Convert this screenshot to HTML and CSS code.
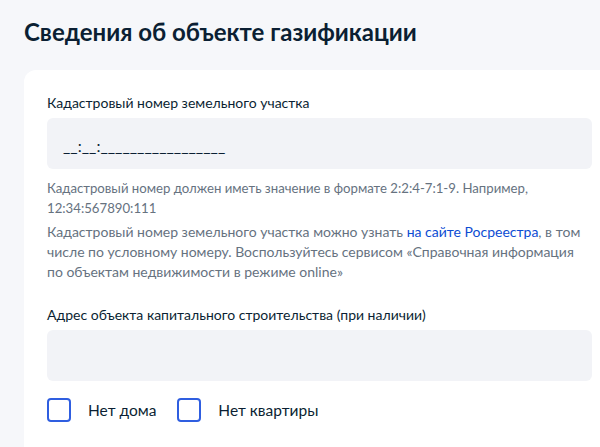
FILE: index.html
```html
<!DOCTYPE html>
<html lang="ru">
<head>
    <meta charset="UTF-8">
    <title>Сведения об объекте газификации</title>
    <link rel="stylesheet" href="styles.css">
</head>
<body>

<h1 class="page-title">Сведения об объекте газификации</h1>

<div class="card">
    <div class="field">
        <label class="field-label" for="cadastral">Кадастровый номер земельного участка</label>
        <div class="input-box">
            <input type="text" id="cadastral" placeholder="__:__:_________________">
        </div>
        <p class="hint hint-format">Кадастровый номер должен иметь значение в формате 2:2:4-7:1-9. Например, 12:34:567890:111</p>
        <p class="hint">Кадастровый номер земельного участка можно узнать <a href="#">на сайте Росреестра</a>, в том числе по условному номеру. Воспользуйтесь сервисом «Справочная информация по объектам недвижимости в режиме online»</p>
    </div>

    <div class="field">
        <label class="field-label" for="address">Адрес объекта капитального строительства (при наличии)</label>
        <div class="input-box">
            <input type="text" id="address">
        </div>
    </div>

    <div class="checks">
        <label class="check">
            <span class="box"></span>
            Нет дома
        </label>
        <label class="check">
            <span class="box"></span>
            Нет квартиры
        </label>
    </div>
</div>

</body>
</html>
```

FILE: styles.css
```css
body {
    font-family: Lato, "Noto Sans", sans-serif;
    margin: 0;
    background-color: #f6f7fa;
    color: #0b1f33;
    overflow: hidden;
}

.page-title {
    font-size: 24px;
    font-weight: 700;
    margin: 0;
    padding: 16px 24px 0;
    line-height: 32px;
}

.card {
    background-color: white;
    border-radius: 12px 0 0 0;
    margin: 22px 0 0 24px;
    padding: 23px 8px 40px 23px;
}

.field {
    margin-bottom: 23px;
}

.field-label {
    display: block;
    font-size: 14px;
    line-height: 20px;
    margin-bottom: 5px;
}

.input-box {
    background-color: #f2f3f7;
    border-radius: 6px;
    height: 51px;
    display: flex;
    align-items: flex-end;
}

.input-box input {
    border: none;
    background: transparent;
    font-family: inherit;
    font-size: 16px;
    padding: 0 16px 14px;
    width: 100%;
    outline: none;
}

.input-box input::placeholder {
    color: #0b1f33;
}

.hint {
    font-size: 14px;
    line-height: 20px;
    color: #66727f;
    margin: 4px 0 0;
}

.hint-format {
    font-size: 13.2px;
    margin-top: 9px;
}

.hint a {
    color: #0d4cd3;
    text-decoration: none;
}

.checks {
    display: flex;
    gap: 21px;
    margin-top: -6px;
}

.check {
    display: flex;
    align-items: center;
    gap: 17px;
    font-size: 15.5px;
}

.box {
    width: 20px;
    height: 20px;
    border: 2px solid #2f5ee0;
    border-radius: 4px;
}
```
